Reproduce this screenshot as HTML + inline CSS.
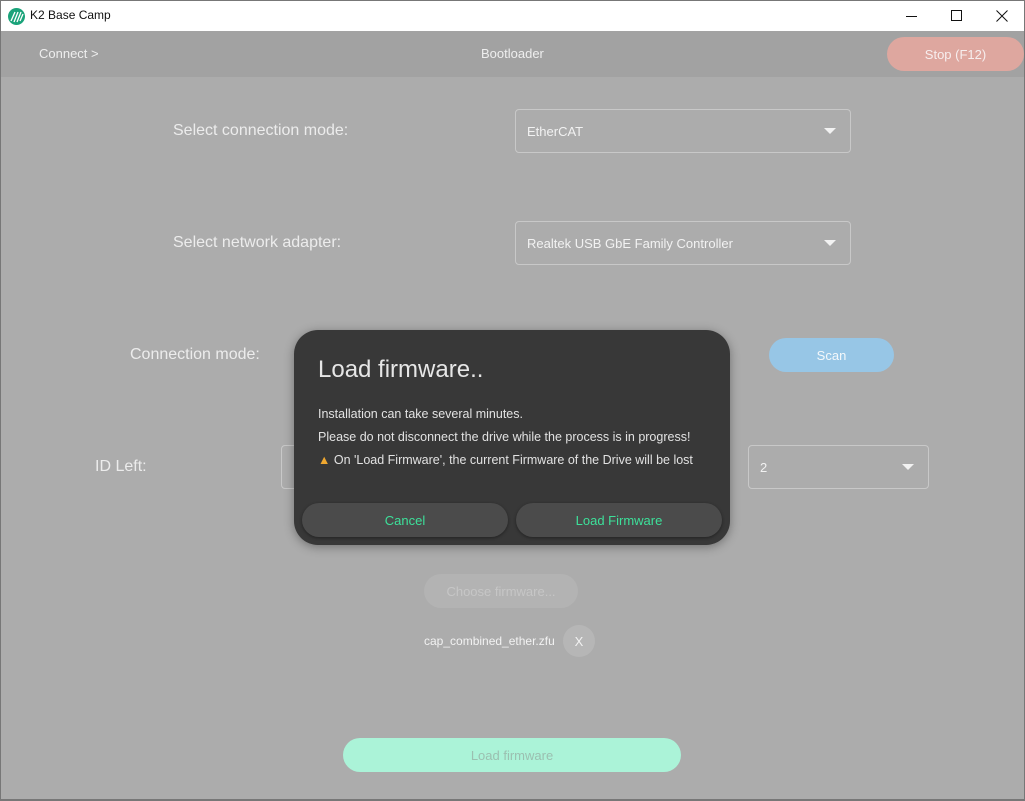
<!DOCTYPE html>
<html><head><style>
*{margin:0;padding:0;box-sizing:border-box}
body{width:1025px;height:801px;overflow:hidden;background:#acacac;font-family:"Segoe UI","Liberation Sans","DejaVu Sans",sans-serif;position:relative;color:#eee}
.a{position:absolute}
.title{left:0;top:0;width:1025px;height:31px;background:#fff;border-top:1px solid #777;border-left:1px solid #777;border-right:1px solid #777}
.nav{left:1px;top:31px;width:1023px;height:46px;background:#a2a2a2}
.lbl{font-size:16px;color:#ececec}
.sel{border:1px solid #c8c8c8;border-radius:4px;font-size:13px;color:#f2f2f2;padding-left:11px;display:flex;align-items:center}
.tri{position:absolute;right:14px;top:50%;margin-top:-3px;width:0;height:0;border-left:6px solid transparent;border-right:6px solid transparent;border-top:6px solid #f2f2f2}
.btn{border-radius:18px;display:flex;align-items:center;justify-content:center;font-size:13px}
</style></head><body>
<div class="a title">
 <svg class="a" style="left:7px;top:7px" width="17" height="17" viewBox="0 0 17 17"><circle cx="8.5" cy="8.5" r="8.5" fill="#1aa37a"/><path d="M3 13L7 4M6 14L10 4M9 14L13 4M12 13L15 6" stroke="#fff" stroke-width="1.3"/></svg>
 <div class="a" style="left:29px;top:7px;font-size:12px;color:#111">K2 Base Camp</div>
 <div class="a" style="left:905px;top:15px;width:11px;height:1px;background:#111"></div>
 <div class="a" style="left:950px;top:9px;width:11px;height:11px;border:1px solid #111"></div>
 <svg class="a" style="left:995px;top:9px" width="12" height="12"><path d="M0.5 0.5L11.5 11.5M11.5 0.5L0.5 11.5" stroke="#111"/></svg>
</div>
<div class="a nav">
 <div class="a" style="left:38px;top:15px;font-size:13px;color:#eee">Connect &gt;</div>
 <div class="a" style="left:480px;top:15px;font-size:13px;color:#eee">Bootloader</div>
 <div class="a btn" style="left:886px;top:6px;width:137px;height:34px;background:#dea79f;color:#f7eeee">Stop (F12)</div>
</div>
<div class="a" style="left:0;top:31px;width:1px;height:770px;background:#777"></div>
<div class="a" style="right:0;top:31px;width:1px;height:770px;background:#777"></div>
<div class="a" style="left:0;top:799px;width:1025px;height:2px;background:#777"></div>

<div class="a lbl" style="left:173px;top:122px">Select connection mode:</div>
<div class="a sel" style="left:515px;top:109px;width:336px;height:44px">EtherCAT<div class="tri"></div></div>
<div class="a lbl" style="left:173px;top:234px">Select network adapter:</div>
<div class="a sel" style="left:515px;top:221px;width:336px;height:44px">Realtek USB GbE Family Controller<div class="tri"></div></div>
<div class="a lbl" style="left:130px;top:346px">Connection mode:</div>
<div class="a btn" style="left:769px;top:338px;width:125px;height:34px;background:#97c6e6;color:#f4f8fb">Scan</div>
<div class="a lbl" style="left:95px;top:458px">ID Left:</div>
<div class="a sel" style="left:281px;top:445px;width:40px;height:44px"></div>
<div class="a sel" style="left:748px;top:445px;width:181px;height:44px">2<div class="tri"></div></div>
<div class="a btn" style="left:424px;top:574px;width:154px;height:34px;background:#b3b3b3;color:#c6c6c6">Choose firmware...</div>
<div class="a" style="left:424px;top:634px;font-size:12px;color:#f2f2f2">cap_combined_ether.zfu</div>
<div class="a btn" style="left:563px;top:625px;width:32px;height:32px;border-radius:16px;background:#b6b6b6;color:#f2f2f2">X</div>
<div class="a btn" style="left:343px;top:738px;width:338px;height:34px;background:#abf3d8;color:#9bbfb0">Load firmware</div>

<div class="a" style="left:294px;top:330px;width:436px;height:215px;background:#383838;border-radius:24px;box-shadow:0 2px 10px rgba(0,0,0,.35)">
 <div class="a" style="left:24px;top:26px;font-size:24px;color:#e6e6e6">Load firmware..</div>
 <div class="a" style="left:24px;top:73px;font-size:12.5px;color:#e2e2e2;line-height:23px">Installation can take several minutes.<br>Please do not disconnect the drive while the process is in progress!<br><span style="color:#f0a830">&#9650;</span> On 'Load Firmware', the current Firmware of the Drive will be lost</div>
 <div class="a btn" style="left:8px;top:173px;width:206px;height:34px;background:#4b4b4b;color:#3de09a;box-shadow:0 1px 3px rgba(0,0,0,.4)">Cancel</div>
 <div class="a btn" style="left:222px;top:173px;width:206px;height:34px;background:#4b4b4b;color:#3de09a;box-shadow:0 1px 3px rgba(0,0,0,.4)">Load Firmware</div>
</div>
</body></html>
